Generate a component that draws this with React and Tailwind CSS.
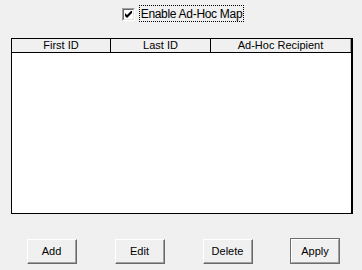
import React from "react";

function Btn({ label, primary }) {
  if (primary) {
    return (
      <div className="w-[50px] h-[26px] border border-[#6d6d6d] bg-[#f0f0f0] flex">
        <div className="flex-1 border-t border-l border-t-white border-l-white border-r border-b border-r-[#a0a0a0] border-b-[#a0a0a0] flex items-center justify-center text-[11px] text-black">
          {label}
        </div>
      </div>
    );
  }
  return (
    <div className="w-[50px] h-[25px] mt-[1px] border-r border-b border-r-[#696969] border-b-[#696969] border-t border-l border-t-white border-l-white bg-[#f0f0f0] flex">
      <div className="flex-1 border-r border-b border-r-[#a0a0a0] border-b-[#a0a0a0] flex items-center justify-center text-[11px] text-black">
        {label}
      </div>
    </div>
  );
}

export default function App() {
  return (
    <div
      className="w-[362px] h-[270px] bg-[#f0f0f0] flex flex-col text-black"
      style={{ fontFamily: '"Liberation Sans", Arial, sans-serif' }}
    >
      <div className="h-[38px] flex justify-center pt-[5px]">
        <div className="flex items-start pl-[4px]">
          <div className="mt-[3px] w-[13px] h-[13px] border border-t-[#a0a0a0] border-l-[#a0a0a0] border-r-white border-b-white bg-white flex">
            <div className="flex-1 border border-t-[#696969] border-l-[#696969] border-r-[#e3e3e3] border-b-[#e3e3e3] bg-white flex items-center justify-center">
              <svg width="7" height="7" viewBox="0 0 7 7">
                <path d="M0 2 L0 5 L2 7 L7 2 L7 -1 L2 4 Z" fill="#000" />
              </svg>
            </div>
          </div>
          <div className="ml-[4px] h-[17px] px-[1px] border border-dotted border-black flex items-center text-[12px] leading-none tracking-[-0.3px]">
            Enable Ad-Hoc Map
          </div>
        </div>
      </div>
      <div className="ml-[11px] w-[342px] h-[176px] border border-black border-r-2 bg-white flex flex-col">
        <div className="h-[14px] flex bg-[#f0f0f0] border-b border-black text-[11px] leading-none">
          <div className="w-[99px] border-r border-black flex items-center justify-center">First ID</div>
          <div className="w-[100px] border-r border-black flex items-center justify-center">Last ID</div>
          <div className="flex-1 border-r border-[#a0a0a0] flex items-center justify-center">Ad-Hoc Recipient</div>
        </div>
        <div className="flex-1 bg-white" />
      </div>
      <div className="flex pl-[27px] mt-[24px] items-start">
        <Btn label="Add" />
        <div className="w-[38px]" />
        <Btn label="Edit" />
        <div className="w-[38px]" />
        <Btn label="Delete" />
        <div className="w-[37px]" />
        <Btn label="Apply" primary />
      </div>
    </div>
  );
}
